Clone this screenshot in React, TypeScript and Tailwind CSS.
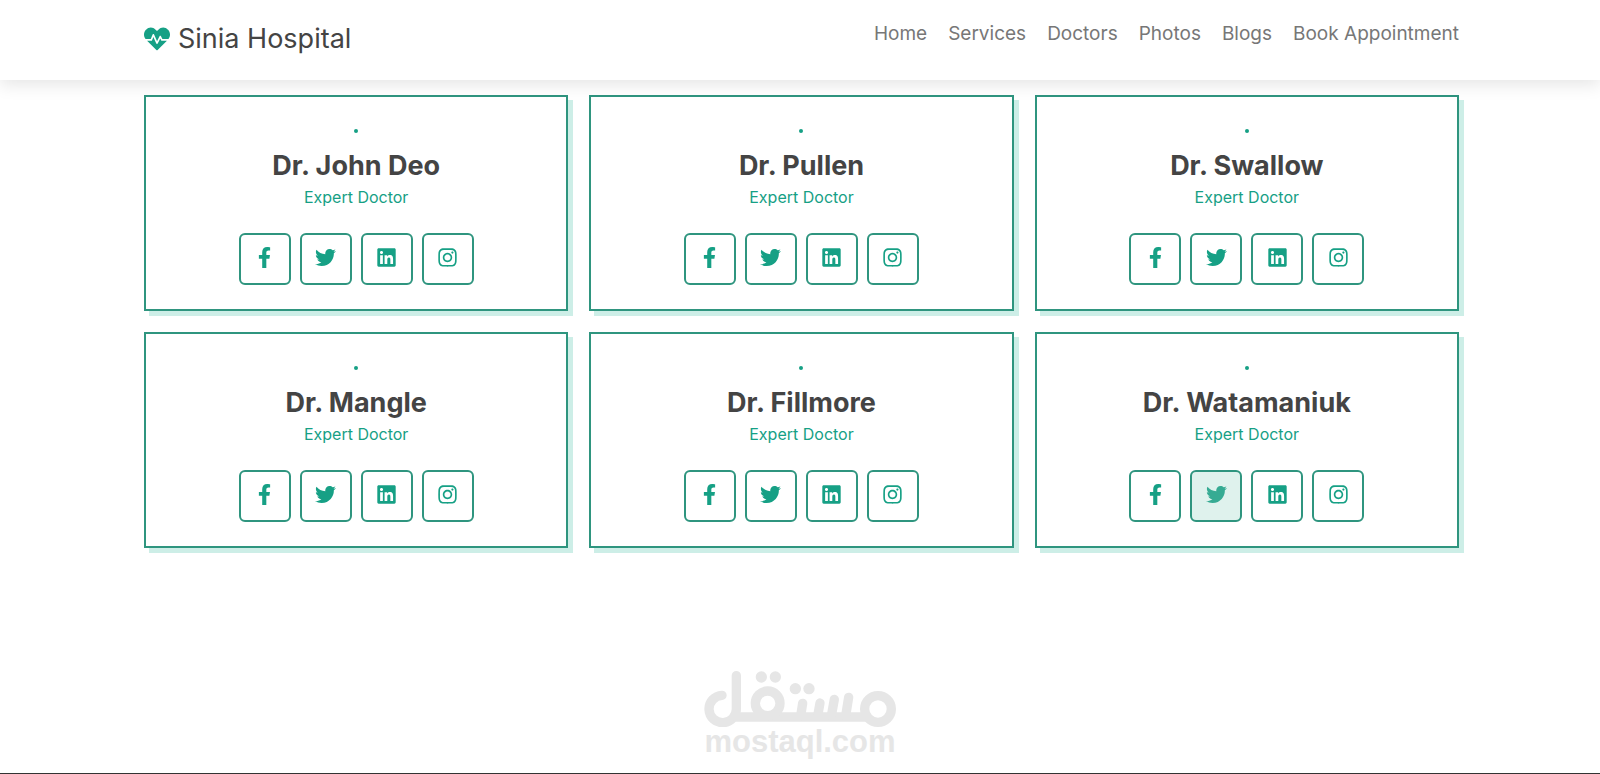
import React from 'react';
import { FaFacebookF, FaHeartbeat, FaInstagram, FaLinkedin, FaTwitter } from 'react-icons/fa';

interface Doctor {
  name: string;
  role: string;
}

const links = ['Home', 'Services', 'Doctors', 'Photos', 'Blogs', 'Book Appointment'];

const doctors: Doctor[] = [
  { name: 'Dr. John Deo', role: 'Expert Doctor' },
  { name: 'Dr. Pullen', role: 'Expert Doctor' },
  { name: 'Dr. Swallow', role: 'Expert Doctor' },
  { name: 'Dr. Mangle', role: 'Expert Doctor' },
  { name: 'Dr. Fillmore', role: 'Expert Doctor' },
  { name: 'Dr. Watamaniuk', role: 'Expert Doctor' },
];

const socials = [
  { label: 'Facebook', Icon: FaFacebookF },
  { label: 'Twitter', Icon: FaTwitter },
  { label: 'LinkedIn', Icon: FaLinkedin },
  { label: 'Instagram', Icon: FaInstagram },
];

const Header: React.FC = () => (
  <header className="sticky top-0 z-10 flex h-20 items-start justify-between bg-white pl-36 pr-[141px] shadow-[0_5px_16px_rgba(0,0,0,0.1)]">
    <a href="#home" className="flex items-center gap-2 pt-5 text-[27px] leading-[38px] text-[#444]">
      <FaHeartbeat size={26} className="text-[#16a085]" />
      Sinia Hospital
    </a>
    <nav className="flex gap-[21px] pt-5 text-[19px] leading-7 text-[#777]">
      {links.map((link) => (
        <a key={link} href={`#${link.toLowerCase().replace(' ', '-')}`} className="hover:text-[#16a085]">
          {link}
        </a>
      ))}
    </nav>
  </header>
);

interface DoctorCardProps {
  doctor: Doctor;
  active?: string;
}

const DoctorCard: React.FC<DoctorCardProps> = ({ doctor, active }) => (
  <article className="flex flex-col items-center border-2 border-[#2f957f] bg-white pb-6 pt-8 shadow-[5px_5px_0_#cdeee7]">
    <span className="size-1 rounded-full bg-[#16a085]" />
    <h3 className="mt-4 text-[27px] font-bold leading-[34px] text-[#444]">{doctor.name}</h3>
    <span className="text-base leading-7 text-[#16a085]">{doctor.role}</span>
    <div className="mt-[22px] flex gap-[9px]">
      {socials.map(({ label, Icon }) => (
        <a
          key={label}
          href={`#${label.toLowerCase()}`}
          aria-label={`${doctor.name} on ${label}`}
          className={`flex size-[52px] items-center justify-center rounded-md border-2 border-[#2f957f] pb-[3px] ${
            active === label ? 'bg-[#dff2ed] text-[#36ab93]' : 'text-[#16a085]'
          }`}
        >
          <Icon size={21} />
        </a>
      ))}
    </div>
  </article>
);

const Watermark: React.FC = () => (
  <div className="flex flex-col items-center text-[#e6e6e6]">
    <svg viewBox="42 30 576 172" className="w-48" fill="none" stroke="currentColor" aria-hidden="true">
      <g strokeWidth="28" strokeLinecap="round" strokeLinejoin="round">
        <path d="M96 106A41 41 0 1 0 139 146V47" />
        <path d="M139 171H525" />
        <path d="M338 130L332 168M390 129L383 168M433 118L424 168M476 112L467 168" />
        <circle cx="233" cy="130" r="37" />
        <circle cx="564" cy="147" r="40" />
      </g>
      <g fill="currentColor" stroke="none">
        <circle cx="214" cy="51" r="17" />
        <circle cx="256" cy="51" r="17" />
        <circle cx="316" cy="86" r="17" />
        <circle cx="357" cy="86" r="17" />
      </g>
    </svg>
    <p className="font-['Liberation_Sans',sans-serif] text-[31px] font-bold leading-[30px]">mostaql.com</p>
  </div>
);

const App: React.FC = () => (
  <div className="flex min-h-screen flex-col border-b border-[#333] bg-white font-['Inter',sans-serif]">
    <Header />
    <main className="grid grid-cols-3 gap-[21px] pl-36 pr-[141px] pt-[15px]">
      {doctors.map((doctor) => (
        <DoctorCard
          key={doctor.name}
          doctor={doctor}
          active={doctor.name === 'Dr. Watamaniuk' ? 'Twitter' : undefined}
        />
      ))}
    </main>
    <footer className="mt-auto pb-4">
      <Watermark />
    </footer>
  </div>
);

export default App;
